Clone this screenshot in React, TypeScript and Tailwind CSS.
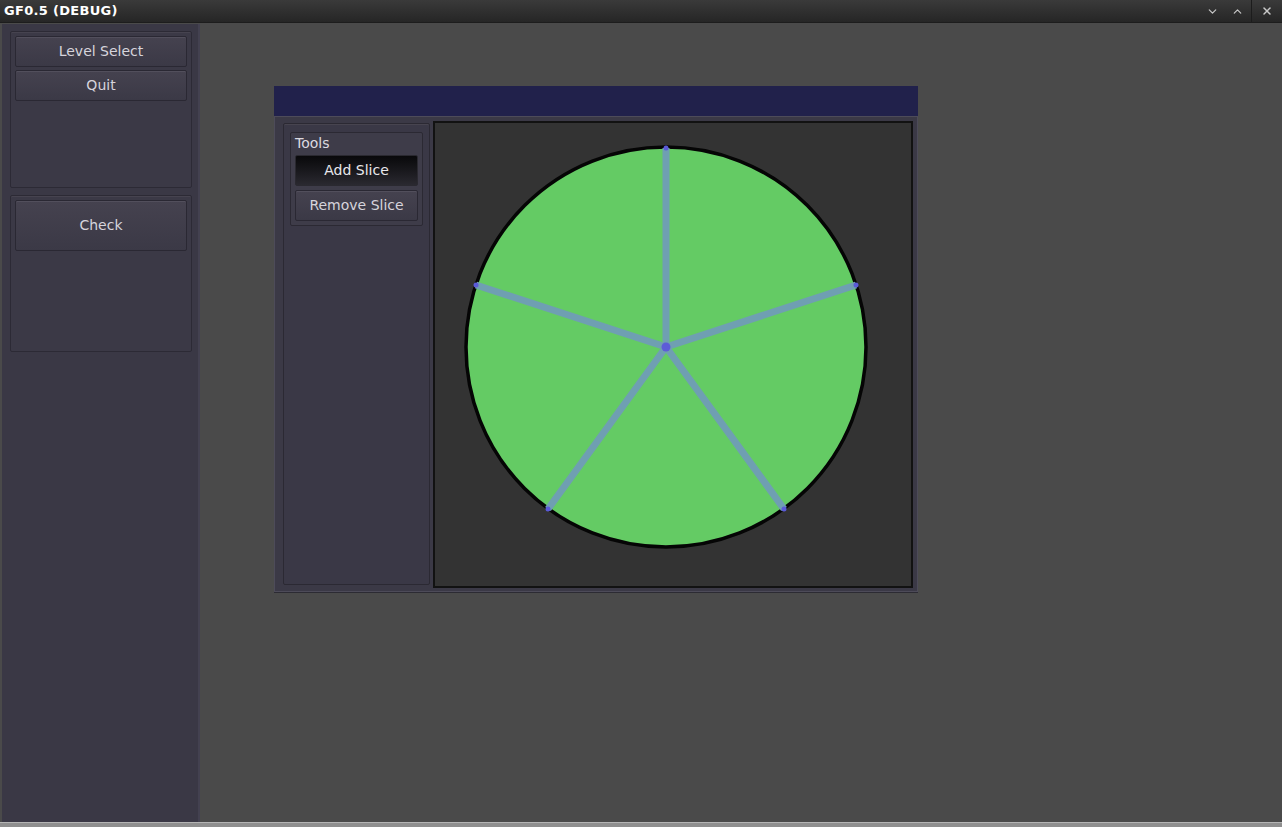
import { ChevronDown, ChevronUp, X } from "lucide-react"

const font = { fontFamily: '"DejaVu Sans", "Liberation Sans", sans-serif' }

function Btn({ label, active, tall }: { label: string; active?: boolean; tall?: boolean }) {
    return (
        <div
            className={
                "flex items-center justify-center rounded-[2px] border text-[14px] " +
                (tall ? "h-[51px] " : "h-[31px] ") +
                (active
                    ? "border-[#2a2930] bg-gradient-to-b from-[#09090b] to-[#2a2930] text-[#e8e8ec]"
                    : "border-[#2a2833] bg-gradient-to-b from-[#45424f] to-[#3b3946] text-[#d6d4dc] shadow-[inset_0_1px_0_#524f5c]")
            }
        >
            {label}
        </div>
    )
}

function Panel({ children }: { children: React.ReactNode }) {
    return (
        <div className="h-[157px] rounded-[2px] border border-[#2c2a35] bg-[#3b3946] p-[4px] flex flex-col gap-[3px] shadow-[inset_0_1px_0_#46434f]">
            {children}
        </div>
    )
}

const spokes = [
    [233, 27],
    [423, 164],
    [351, 388],
    [115, 388],
    [43, 164],
]

export default function App() {
    return (
        <div className="w-[1282px] h-[827px] flex flex-col bg-[#4a4a4a] overflow-hidden" style={font}>
            <div className="h-[23px] flex items-center justify-between bg-gradient-to-b from-[#3a3a3a] to-[#262626] border-b border-[#1d1d1d]">
                <span className="pl-[4px] text-[13px] font-bold text-white tracking-[0.3px]">GF0.5 (DEBUG)</span>
                <div className="flex items-center h-full text-[#c8c8c8]">
                    <ChevronDown size={13} strokeWidth={2.2} className="mr-[12px]" />
                    <ChevronUp size={13} strokeWidth={2.2} className="mr-[7px]" />
                    <div className="h-full border-l border-[#1c1c1c] flex items-center px-[9px]">
                        <X size={12} strokeWidth={3} />
                    </div>
                </div>
            </div>

            <div className="flex-1 flex">
                <div className="ml-[2px] mt-[1px] w-[198px] bg-[#3a3845] border-r-[2px] border-[#434150] pl-[8px] pr-[6px] pt-[7px] flex flex-col gap-[7px]">
                    <Panel>
                        <Btn label="Level Select" />
                        <Btn label="Quit" />
                    </Panel>
                    <Panel>
                        <Btn label="Check" tall />
                    </Panel>
                </div>

                <div className="pl-[74px] pt-[63px]">
                    <div className="w-[644px] h-[30px] bg-[#21214b]" />
                    <div className="w-[644px] h-[476px] bg-[#3b3946] border border-[#4d4b59] shadow-[0_1px_0_#2c2b33] flex pl-[8px] pt-[4px] gap-[3px]">
                        <div className="mt-[2px] w-[147px] h-[462px] rounded-[2px] border border-[#2b2933] bg-[#3a3846] px-[6px] pt-[8px] shadow-[inset_0_1px_0_#47444f]">
                            <div className="rounded-[2px] border border-[#2b2933] bg-[#3e3c49] px-[4px] pt-[2px] pb-[4px] flex flex-col gap-[4px]">
                                <span className="text-[14px] leading-[16px] text-[#dcdae0]">Tools</span>
                                <Btn label="Add Slice" active />
                                <Btn label="Remove Slice" />
                            </div>
                        </div>
                        <div className="w-[480px] h-[467px] bg-[#333333] border-2 border-[#121212]">
                            <svg width="476" height="463" viewBox="2 2 476 463">
                                <circle cx="233" cy="226" r="200" fill="#64cb64" stroke="#050505" strokeWidth="3.5" />
                                {spokes.map(([x, y], i) => (
                                    <line key={i} x1="233" y1="226" x2={x} y2={y} stroke="#6f9fb2" strokeWidth="7" />
                                ))}
                                {spokes.map(([x, y], i) => (
                                    <circle key={"d" + i} cx={x} cy={y} r="2.5" fill="#5a5ad8" />
                                ))}
                                <circle cx="233" cy="226" r="4.5" fill="#5d5cd8" />
                            </svg>
                        </div>
                    </div>
                </div>
            </div>
            <div className="h-[5px] bg-[#8f8f8f] border-t border-[#b5b5b5]" />
        </div>
    )
}
